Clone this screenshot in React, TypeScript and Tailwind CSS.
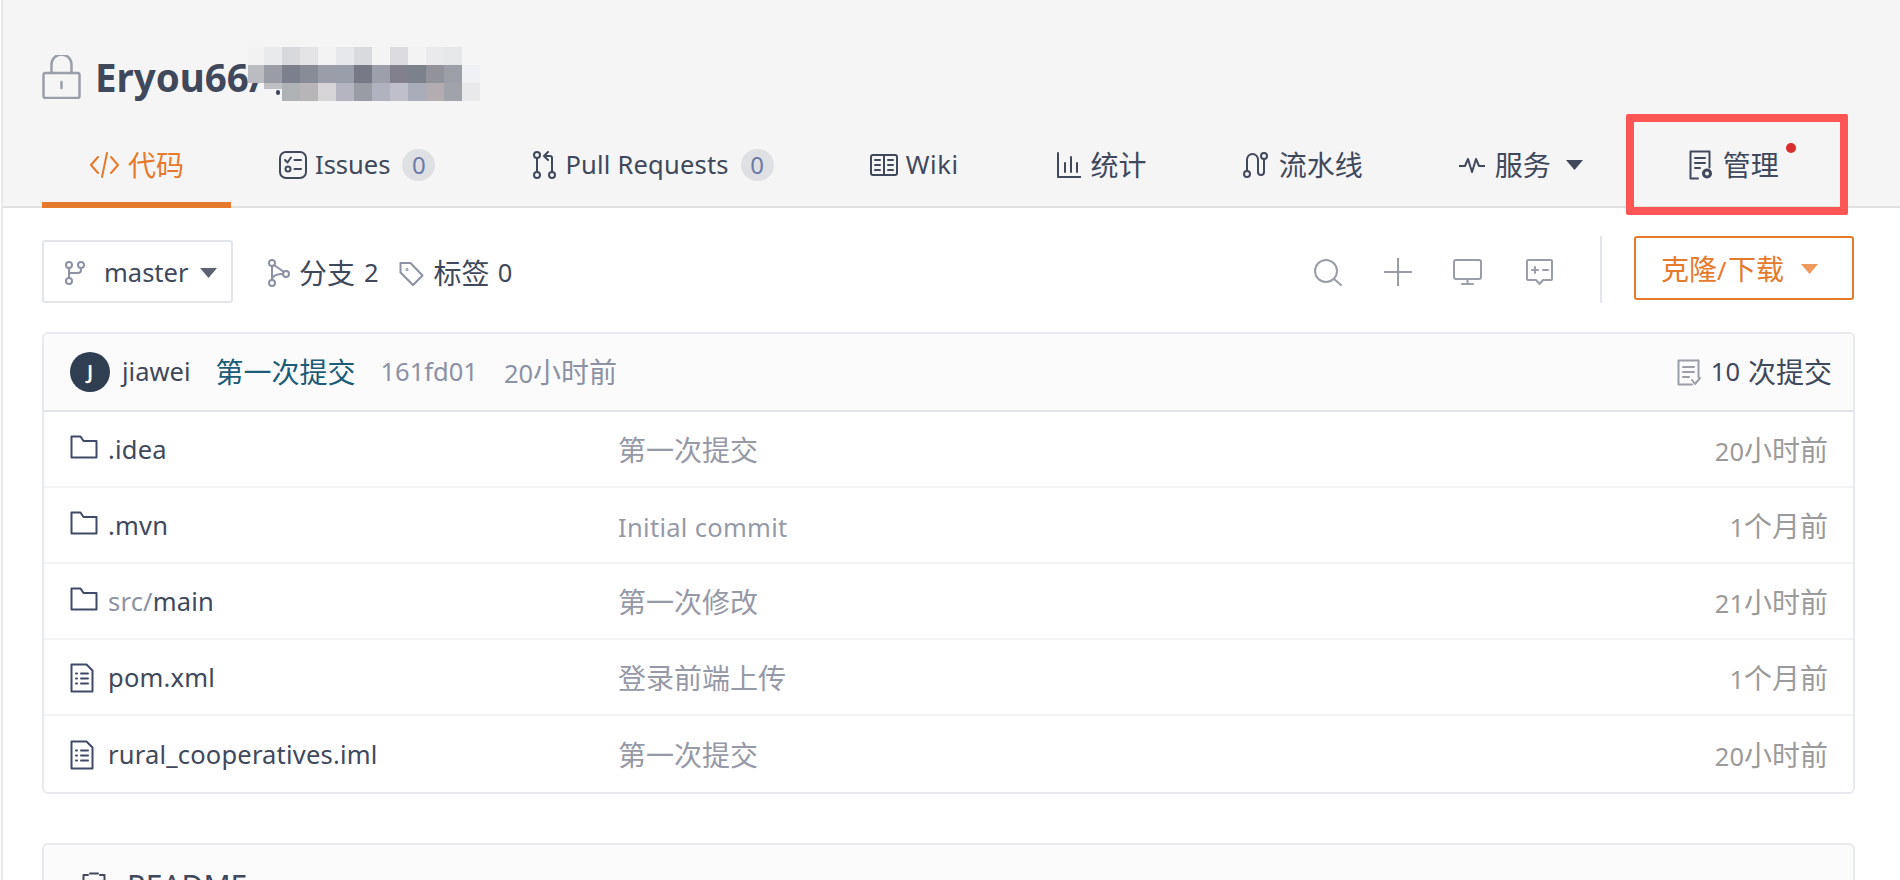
import React from "react";

const L = ({ children, className = "" }: { children: React.ReactNode; className?: string }) => (
  <span className={`text-[25.5px] ${className}`}>{children}</span>
);

const mosaic: [number, number, string, number?, number?][] = [
  ["#f2f2f2", 0, 0, 16, 18],
  ...["#e9eaec", "#d8d9dc", "#e4e4e6", "#f3f3f3", "#e6e7ea", "#d9dadd", "#f4f4f4", "#dcdce0", "#f3f3f4", "#eaeaec", "#e6e7e9"].map(
    (c, i) => [c, 16 + i * 18, 0, 18, 18] as [string, number, number, number, number]
  ),
  ["#bbbcc1", 0, 18, 16, 18],
  ...["#9a9ca6", "#7c808c", "#888c97", "#9b9ea9", "#9a9daa", "#777a86", "#9d9fab", "#82808c", "#7c828c", "#92929b", "#9c9fa7", "#f0f1f4"].map(
    (c, i) => [c, 16 + i * 18, 18, 18, 18] as [string, number, number, number, number]
  ),
  ["#c0bfc4", 16, 36, 18, 6],
  ...["#aeb2b5", "#b8b5b8", "#d6d4d7", "#b4b5c1", "#9a9ca5", "#b0b2bf", "#bfbfca", "#a9acb9", "#b3adb2", "#a0a3aa", "#e9e9eb"].map(
    (c, i) => [c, 34 + i * 18, 36, 18, 18] as [string, number, number, number, number]
  ),
] as any;

const Svg = ({ w, h, color = "#40485b", sw = 2, children }: { w: number; h: number; color?: string; sw?: number; children: React.ReactNode }) => (
  <svg width={w} height={h} viewBox={`0 0 ${w} ${h}`} fill="none" stroke={color} strokeWidth={sw} strokeLinecap="round" strokeLinejoin="round" className="shrink-0">
    {children}
  </svg>
);

const Folder = () => (
  <Svg w={28} h={24} sw={2} color="#3f4a66">
    <path d="M1.500 22.500V1.500h9l3 4.500h13v16.500z" />
  </Svg>
);

const FileList = () => (
  <Svg w={24} h={30} sw={2} color="#3f4a66">
    <path d="M1.500 28.500V1.500h15l6 6v21z" />
    <path d="M6 10.500h1M11 10.500h7M6 15.500h1M11 15.500h7M6 20.500h1M11 20.500h7" />
  </Svg>
);

const Badge = () => (
  <span className="ml-[12px] flex h-[32px] w-[33px] items-center justify-center rounded-full bg-[#dfe0e3] text-[24px] text-[#6c7aa8]">0</span>
);

const Caret = ({ color = "#40485b" }: { color?: string }) => (
  <svg width="17" height="10" viewBox="0 0 17 10" className="shrink-0">
    <path d="M0 0h17l-8.500 10z" fill={color} />
  </svg>
);

const rows = [
  { icon: "d", name: <span>.idea</span>, msg: "第一次提交", cjk: true, num: "20", unit: "小时前" },
  { icon: "d", name: <span>.mvn</span>, msg: "Initial commit", cjk: false, num: "1", unit: "个月前" },
  { icon: "d", name: <><span className="text-[#8c92a4]">src/</span>main</>, msg: "第一次修改", cjk: true, num: "21", unit: "小时前" },
  { icon: "f", name: <span>pom.xml</span>, msg: "登录前端上传", cjk: true, num: "1", unit: "个月前" },
  { icon: "f", name: <span>rural_cooperatives.iml</span>, msg: "第一次提交", cjk: true, num: "20", unit: "小时前" },
];

export default function App() {
  return (
    <div
      className="relative ml-px h-[880px] w-[1899px] overflow-hidden border-l-2 border-[#e8e9ea] bg-white text-[28px] leading-none text-[#40485b]"
      style={{ fontFamily: '"Noto Sans", "Noto Sans CJK SC", sans-serif' }}
    >
      <div className="h-[208px] border-b-2 border-[#e0e0e0] bg-[#f5f5f5] pl-[39px]">
        <div className="relative flex h-[122px] items-center pt-[32px]">
          <Svg w={39} h={44} color="#9a9ea9" sw={2.5}>
            <rect x="1.500" y="18" width="36" height="25" rx="2" />
            <path d="M9.500 18V9.500a10 10 0 0 1 20 0V18" />
            <path d="M19.500 27v6" />
          </Svg>
          <span className="ml-[14px] text-[38.5px] font-bold">Eryou66/</span>
          <span className="absolute left-[234px] top-[90px] h-[5px] w-[4px] rounded-full bg-[#40485b]" />
          <svg width="234" height="54" viewBox="0 0 234 54" className="absolute left-[206px] top-[47px]">
            {(mosaic as any[]).map(([col, x, y, w, h], i) => (
              <rect key={i} x={x} y={y} width={w} height={h} fill={col} />
            ))}
          </svg>
        </div>
        <div className="flex h-[84px]">
          <div className="box-border flex h-[86px] w-[189px] items-center gap-[9px] border-b-[6px] border-[#e67a2c] pl-[48px] pt-[6px] text-[#e67a2c]">
            <Svg w={29} h={26} color="#e67a2c" sw={2}>
              <path d="M8 5l-7 8 7 8M21 5l7 8-7 8M17 1l-5 24" />
            </Svg>
            <span>代码</span>
          </div>
          <div className="flex h-[86px] items-center pl-[48px] pr-[48px]">
            <Svg w={28} h={28}>
              <rect x="1" y="1" width="26" height="26" rx="6" />
              <path d="M6 9l2.500 2.500L12 6.500M15.500 9H22M15.500 18H22" />
              <circle cx="9" cy="18" r="2.500" />
            </Svg>
            <L className="ml-[8px]">Issues</L>
            <Badge />
          </div>
          <div className="flex h-[86px] items-center pl-[50px] pr-[48px]">
            <Svg w={23} h={28}>
              <circle cx="4" cy="4" r="3" />
              <circle cx="4" cy="24" r="3" />
              <circle cx="19" cy="24" r="3" />
              <path d="M4 7v14M19 21V7a2 2 0 0 0-2-2h-5M15 1l-4 4 4 4" />
            </Svg>
            <L className="ml-[9px] tracking-[0.2px]">Pull Requests</L>
            <Badge />
          </div>
          <div className="flex h-[86px] items-center pl-[48px] pr-[48px]">
            <Svg w={28} h={22}>
              <rect x="1" y="1" width="26" height="20" rx="2" />
              <path d="M14 1v20M5 6h5M5 11h5M5 16h5M18 6h5M18 11h5M18 16h5" />
            </Svg>
            <L className="ml-[8px] tracking-[0.6px]">Wiki</L>
          </div>
          <div className="flex h-[86px] items-center pl-[50px] pr-[48px]">
            <Svg w={24} h={26}>
              <path d="M1 1v24h23M8 20v-9M14 20V5M20 20v-9" />
            </Svg>
            <span className="ml-[10px]">统计</span>
          </div>
          <div className="flex h-[86px] items-center pl-[48px] pr-[48px]">
            <Svg w={25} h={28}>
              <circle cx="4" cy="23" r="3" />
              <circle cx="21" cy="5" r="3" />
              <path d="M4 20V8.500a5.500 5.500 0 0 1 11 0V21a3 3 0 0 0 6 0V8" />
            </Svg>
            <span className="ml-[11px]">流水线</span>
          </div>
          <div className="flex h-[86px] items-center pl-[48px]">
            <Svg w={26} h={20}>
              <path d="M0 11h6l3-7 4 13 4-13 3 7h6" />
            </Svg>
            <span className="ml-[10px]">服务</span>
            <span className="ml-[15px]"><Caret /></span>
          </div>
          <div className="relative flex h-[86px] items-center pl-[106px]">
            <Svg w={25} h={30}>
              <path d="M9 28.500H1.500v-27h19v16" />
              <path d="M6 8h10M6 13h10M6 18h5" />
              <circle cx="18" cy="23.500" r="3.500" strokeWidth="3" />
            </Svg>
            <span className="ml-[9px]">管理</span>
            <span className="absolute left-[203px] top-[21px] h-[10px] w-[10px] rounded-full bg-[#da2e2e]" />
          </div>
        </div>
      </div>

      <div className="flex h-[124px] pl-[39px] pr-[46px]">
        <div className="mt-[32px] box-border flex h-[63px] w-[191px] items-center rounded-[3px] border-2 border-[#e2e5e9] pl-[21px] pt-[3px]">
          <Svg w={20} h={24} color="#8c92a4">
            <circle cx="4" cy="4" r="3" />
            <circle cx="16" cy="4" r="3" />
            <circle cx="4" cy="20" r="3" />
            <path d="M4 7v10M16 7v2a3 3 0 0 1-3 3H4" />
          </Svg>
          <L className="ml-[19px]">master</L>
          <span className="ml-[12px]"><Caret color="#5c6272" /></span>
        </div>
        <div className="mt-[32px] flex h-[63px] items-center pt-[3px]">
          <span className="ml-[34px]">
            <Svg w={23} h={28} color="#8c92a4">
              <circle cx="5" cy="4" r="3" />
              <circle cx="19" cy="15" r="3" />
              <circle cx="5" cy="24" r="3" />
              <path d="M5 7v14M7 6l10 7M16 15c-5 0-11 1-11 6" />
            </Svg>
          </span>
          <span className="ml-[9px]">分支</span>
          <L className="ml-[9px]">2</L>
          <span className="ml-[20px]">
            <Svg w={25} h={25} color="#8c92a4">
              <path d="M1.500 2h10l12 12.500-9.500 9.500L1.500 11.500z" />
              <circle cx="8" cy="8.500" r="0.500" />
            </Svg>
          </span>
          <span className="ml-[10px]">标签</span>
          <L className="ml-[8px]">0</L>
        </div>
        <div className="ml-auto flex items-start">
          <div className="mt-[50px] flex items-center">
            <Svg w={28} h={27} color="#9a9ea9">
              <circle cx="12" cy="12" r="11" />
              <path d="M20 20l7 6" />
            </Svg>
            <span className="ml-[42px]">
              <Svg w={28} h={28} color="#9a9ea9">
                <path d="M14 0v28M0 14h28" />
              </Svg>
            </span>
            <span className="ml-[41px]">
              <Svg w={29} h={26} color="#9a9ea9">
                <rect x="1" y="1" width="27" height="19" rx="2" />
                <path d="M14.500 20v5M9 25h11" />
              </Svg>
            </span>
            <span className="ml-[44px]">
              <Svg w={27} h={26} color="#9a9ea9">
                <path d="M1 2a1 1 0 0 1 1-1h23a1 1 0 0 1 1 1v18a1 1 0 0 1-1 1h-8l-3.500 4L10 21H2a1 1 0 0 1-1-1z" />
                <path d="M6 11h6M9 8v6M17 11h5" />
              </Svg>
            </span>
          </div>
          <div className="ml-[47px] mt-[28px] h-[67px] w-[2px] bg-[#e2e5e9]" />
          <div className="ml-[32px] mt-[28px] box-border flex h-[64px] w-[220px] items-center rounded-[3px] border-2 border-[#e67a2c] pl-[25px] pt-[2px] text-[#e67a2c]">
            <span>克隆<L className="tracking-[1.500px]">/</L>下载</span>
            <span className="ml-[17px]"><Caret color="#ee9a5c" /></span>
          </div>
        </div>
      </div>

      <div className="ml-[39px] mr-[45px] overflow-hidden rounded-[6px] border-2 border-[#e6e9ed]">
        <div className="box-border flex h-[78px] items-center border-b-2 border-[#e0e3e7] bg-[#fbfbfb] pl-[26px] pr-[21px]">
          <span className="flex h-[40px] w-[40px] items-center justify-center rounded-full bg-[#2f3e50] text-[20px] font-semibold text-white">J</span>
          <L className="ml-[12px]">jiawei</L>
          <span className="ml-[25px] text-[#1b5c78]">第一次提交</span>
          <L className="ml-[25px] text-[#8c92a4]">161fd01</L>
          <span className="ml-[26px] text-[#8c92a4]"><L>20</L>小时前</span>
          <span className="ml-auto flex items-center">
            <Svg w={24} h={27} color="#9a9ea9">
              <path d="M15 25.500H1.500v-24h20V18M6 8h11M6 13h11M6 18h6M15 21l3 4 5-6" />
            </Svg>
            <L className="ml-[10px]">10</L>
            <span className="ml-[8px]">次提交</span>
          </span>
        </div>
        {rows.map((r, i) => (
          <div key={i} className={`box-border flex h-[76px] items-center pl-[26px] pr-[25px] pt-[2px] ${i < 4 ? "border-b-2 border-[#f3f4f5]" : ""}`}>
            <span className={`flex w-[38px] items-center ${r.icon === "d" ? "-mt-[6px]" : ""}`}>{r.icon === "d" ? <Folder /> : <FileList />}</span>
            <L className="w-[510px] shrink-0 tracking-[0.2px]">{r.name}</L>
            <span className="text-[#9699a6]">{r.cjk ? r.msg : <L className="tracking-[0.3px]">{r.msg}</L>}</span>
            <span className="ml-auto text-[#9b9b9b]"><L>{r.num}</L>{r.unit}</span>
          </div>
        ))}
      </div>

      <div className="ml-[39px] mr-[45px] mt-[49px] h-[200px] rounded-[6px] border-2 border-[#e6e9ed] bg-[#fbfbfb] pl-[38px] pt-[26px]">
        <div className="flex items-center">
          <Svg w={24} h={28}>
            <path d="M6 3H1.500v24h21V3H18M8 1.500h8M7 11h10M7 17h10" />
          </Svg>
          <span className="ml-[21px] text-[30px]">README</span>
        </div>
      </div>

      <div className="absolute left-[1623px] top-[114px] h-[101px] w-[222px] rounded-[2px] border-8 border-[#ff5555]" />
    </div>
  );
}
